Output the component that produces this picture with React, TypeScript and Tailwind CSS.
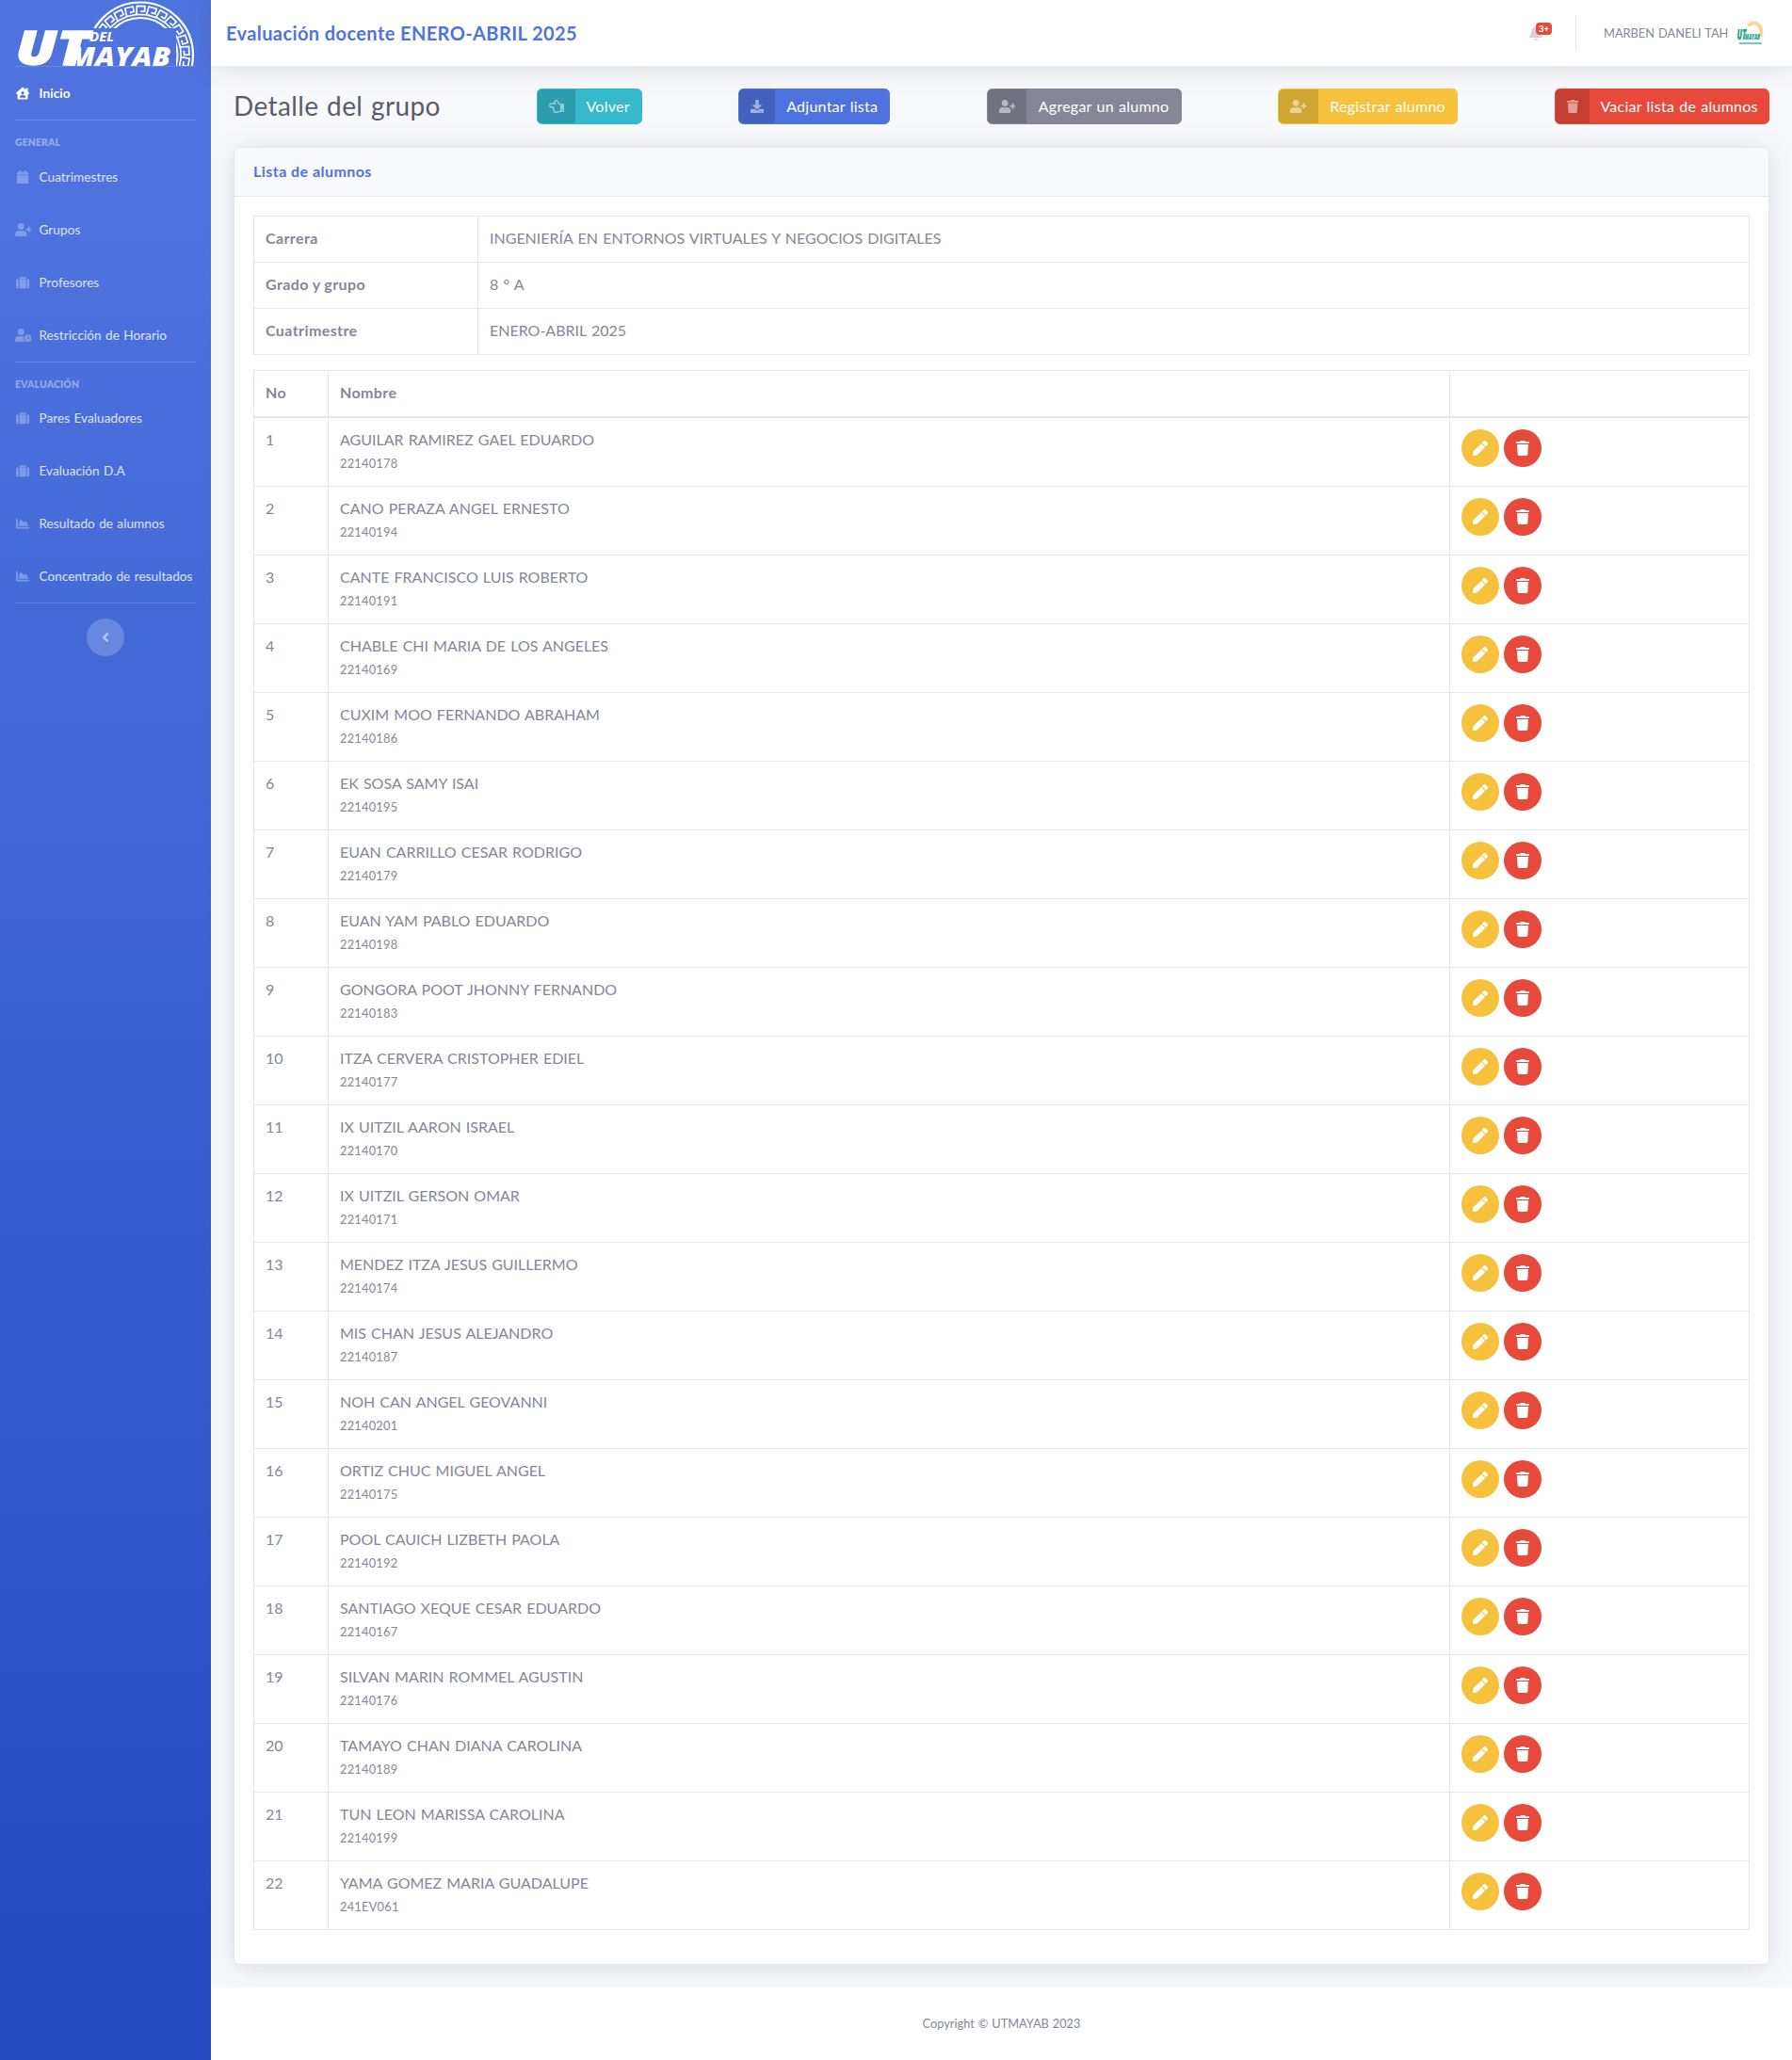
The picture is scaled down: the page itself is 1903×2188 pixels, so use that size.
import { ReactNode } from "react";
import {
  FaHouseUser, FaCalendar, FaUserPlus, FaSuitcase, FaUserClock, FaChartArea, FaAngleLeft,
  FaBell, FaRegHandPointLeft, FaDownload, FaTrash, FaPen,
} from "react-icons/fa";

const students: [string, string][] = [
  ["AGUILAR RAMIREZ GAEL EDUARDO", "22140178"],
  ["CANO PERAZA ANGEL ERNESTO", "22140194"],
  ["CANTE FRANCISCO LUIS ROBERTO", "22140191"],
  ["CHABLE CHI MARIA DE LOS ANGELES", "22140169"],
  ["CUXIM MOO FERNANDO ABRAHAM", "22140186"],
  ["EK SOSA SAMY ISAI", "22140195"],
  ["EUAN CARRILLO CESAR RODRIGO", "22140179"],
  ["EUAN YAM PABLO EDUARDO", "22140198"],
  ["GONGORA POOT JHONNY FERNANDO", "22140183"],
  ["ITZA CERVERA CRISTOPHER EDIEL", "22140177"],
  ["IX UITZIL AARON ISRAEL", "22140170"],
  ["IX UITZIL GERSON OMAR", "22140171"],
  ["MENDEZ ITZA JESUS GUILLERMO", "22140174"],
  ["MIS CHAN JESUS ALEJANDRO", "22140187"],
  ["NOH CAN ANGEL GEOVANNI", "22140201"],
  ["ORTIZ CHUC MIGUEL ANGEL", "22140175"],
  ["POOL CAUICH LIZBETH PAOLA", "22140192"],
  ["SANTIAGO XEQUE CESAR EDUARDO", "22140167"],
  ["SILVAN MARIN ROMMEL AGUSTIN", "22140176"],
  ["TAMAYO CHAN DIANA CAROLINA", "22140189"],
  ["TUN LEON MARISSA CAROLINA", "22140199"],
  ["YAMA GOMEZ MARIA GUADALUPE", "241EV061"],
];

const details: [string, string][] = [
  ["Carrera", "INGENIERÍA EN ENTORNOS VIRTUALES Y NEGOCIOS DIGITALES"],
  ["Grado y grupo", "8 ° A"],
  ["Cuatrimestre", "ENERO-ABRIL 2025"],
];

function Logo() {
  const keys = Array.from({ length: 13 }, (_, i) => -68 + i * 14);
  return (
    <svg viewBox="0 0 192 70" className="block h-[70px] w-48 overflow-visible" fill="none">
      <defs>
        <clipPath id="arch">
          <path d="M0 0 H192 V70 H171 V30 H0 Z" />
        </clipPath>
      </defs>
      <g clipPath="url(#arch)" stroke="#fff">
        <circle cx="133" cy="58.500" r="56" strokeWidth="2.2" />
        <circle cx="133" cy="58.500" r="39.500" strokeWidth="2" />
        {keys.map((a) => (
          <path
            key={a}
            transform={`rotate(${a} 133 58.500)`}
            d="M127.500 15.500 V6.500 H136 V12 H131.500 M126.700 15.500 H139"
            strokeWidth="1.7"
          />
        ))}
      </g>
      <g fill="#fff" className="font-['Open_Sans'] italic">
        <text x="0.500" y="69" fontSize="50" fontWeight="800" textLength="78" lengthAdjust="spacingAndGlyphs" stroke="#fff" strokeWidth="1.400">UT</text>
        <text x="79" y="43.500" fontSize="13.500" fontWeight="700" textLength="26" lengthAdjust="spacingAndGlyphs">DEL</text>
        <text x="57" y="69.500" fontSize="29" fontWeight="800" textLength="108" lengthAdjust="spacingAndGlyphs">MAYAB</text>
      </g>
    </svg>
  );
}

function Avatar() {
  return (
    <svg viewBox="0 0 32 32" className="size-8 overflow-visible" fill="none">
      <path d="M14 9 C16 4 25 4 27 12 Q28 16 27 20" stroke="#f9d79a" strokeWidth="4" />
      <g fill="#12a384" className="font-['Open_Sans'] italic">
        <text x="1.500" y="22.500" fontSize="15" fontWeight="800" textLength="10" lengthAdjust="spacingAndGlyphs">UT</text>
        <text x="10" y="22.500" fontSize="8" fontWeight="800" textLength="16" lengthAdjust="spacingAndGlyphs">MAYAB</text>
      </g>
      <path d="M4 27 H28" stroke="#4fb8a0" strokeWidth="1.500" />
    </svg>
  );
}

function NavItem({ icon, label, active }: { icon: ReactNode; label: string; active?: boolean }) {
  return (
    <a className={`flex h-14 items-center px-4 text-[13.6px] ${active ? "font-bold text-white" : "text-white/80"}`}>
      <span className={`mr-1 flex w-[17px] shrink-0 justify-center text-[14.2px] ${active ? "text-white" : "text-white/30"}`}>{icon}</span>
      <span className="ml-[4.5px] tracking-[0.05px] whitespace-nowrap [word-spacing:0.8px]">{label}</span>
    </a>
  );
}

const ic = "h-[1em] w-auto shrink-0";
const icWide = "h-[1em] w-[1.25em] shrink-0";
const icSm = "h-[0.875em] w-auto shrink-0";
const icSmWide = "h-[14px] w-[17.5px] shrink-0";

function ActionButton({ icon, label, color }: { icon: ReactNode; label: string; color: string }) {
  return (
    <a className={`flex h-[38px] items-stretch overflow-hidden rounded-[5.6px] border text-white ${color}`}>
      <span className="flex items-center bg-black/15 px-3 text-white/50">{icon}</span>
      <span className="flex grow items-center justify-center pb-px tracking-[0.25px] whitespace-nowrap [word-spacing:0.8px]">{label}</span>
    </a>
  );
}

export default function App() {
  return (
    <div className="flex min-h-[2188px] w-full bg-white font-['Lato',sans-serif] text-base leading-6 text-[#858796]">
      <aside className="w-56 shrink-0 bg-linear-to-b from-[#4e73df] from-10% to-[#224abe]">
        <div className="h-[70px] px-4"><Logo /></div>
        <hr className="mx-4 border-white/15" />
        <NavItem active icon={<FaHouseUser className={ic} />} label="Inicio" />
        <hr className="mx-4 border-white/15" />
        <h6 className="mt-[15px] mb-px px-4 text-[10.4px] leading-4 font-extrabold tracking-[0.15px] text-white/40">GENERAL</h6>
        <NavItem icon={<FaCalendar className={ic} />} label="Cuatrimestres" />
        <NavItem icon={<FaUserPlus className={icWide} />} label="Grupos" />
        <NavItem icon={<FaSuitcase className={ic} />} label="Profesores" />
        <NavItem icon={<FaUserClock className={icWide} />} label="Restricción de Horario" />
        <hr className="mx-4 border-white/15" />
        <h6 className="mt-[15px] px-4 text-[10.4px] leading-4 font-extrabold tracking-[0.15px] text-white/40">EVALUACIÓN</h6>
        <NavItem icon={<FaSuitcase className={ic} />} label="Pares Evaluadores" />
        <NavItem icon={<FaSuitcase className={ic} />} label="Evaluación D.A" />
        <NavItem icon={<FaChartArea className={ic} />} label="Resultado de alumnos" />
        <NavItem icon={<FaChartArea className={ic} />} label="Concentrado de resultados" />
        <hr className="mx-4 border-white/15" />
        <button className="mx-auto mt-4 flex size-10 items-center justify-center rounded-full bg-white/20 text-white/50">
          <FaAngleLeft className={ic} />
        </button>
      </aside>

      <div className="flex min-w-0 grow flex-col bg-[#f8f9fc]">
        <header className="flex h-[70px] shrink-0 items-center justify-between bg-white pr-7 pl-4 shadow-[0_2.4px_28px_0_rgba(58,59,69,0.15)]">
          <h5 className="text-xl font-bold tracking-[0.4px] text-[#4e73df]">Evaluación docente ENERO-ABRIL 2025</h5>
          <div className="flex items-center">
            <div className="relative text-[#d1d3e2]">
              <FaBell className={ic} />
              <span className="absolute -top-[3px] left-2 flex h-[13px] w-[17px] items-center justify-center rounded bg-[#e74a3b] text-[9.6px] leading-none font-bold text-white">3+</span>
            </div>
            <div className="mr-[29px] ml-[34px] h-[38px] border-r border-[#e3e6f0]" />
            <span className="mr-2 w-[132px] text-[12.8px] whitespace-nowrap [word-spacing:0.8px]">MARBEN DANELI TAH</span>
            <Avatar />
          </div>
        </header>

        <main className="px-6 pt-6">
          <div className="mb-6 flex h-[38px] items-center justify-between">
            <h1 className="w-[219px] pb-0.5 text-[28px] tracking-[0.4px] whitespace-nowrap text-[#5a5c69] [word-spacing:1px]">Detalle del grupo</h1>
            <ActionButton color="w-28 border-[#36b9cc] bg-[#36b9cc]" icon={<FaRegHandPointLeft className={ic} />} label="Volver" />
            <ActionButton color="w-[161px] border-[#4e73df] bg-[#4e73df]" icon={<FaDownload className={icSm} />} label="Adjuntar lista" />
            <ActionButton color="w-[207px] border-[#858796] bg-[#858796]" icon={<FaUserPlus className={icSmWide} />} label="Agregar un alumno" />
            <ActionButton color="w-[191px] border-[#f6c23e] bg-[#f6c23e]" icon={<FaUserPlus className={icSmWide} />} label="Registrar alumno" />
            <ActionButton color="w-[228px] border-[#e74a3b] bg-[#e74a3b]" icon={<FaTrash className="h-[14px] w-[12.25px] shrink-0" />} label="Vaciar lista de alumnos" />
          </div>

          <section className="rounded-[5.6px] border border-[#e3e6f0] bg-white shadow-[0_2.4px_28px_0_rgba(58,59,69,0.15)]">
            <div className="flex h-[52px] items-center rounded-t-[5.6px] border-b border-[#e3e6f0] bg-[#f8f9fc] px-5 pb-px">
              <h6 className="font-bold tracking-[0.45px] text-[#4e73df]">Lista de alumnos</h6>
            </div>
            <div className="p-5">
              <table className="mb-4 w-full table-fixed border-collapse">
                <colgroup><col className="w-[238px]" /><col /></colgroup>
                <tbody>
                  {details.map(([k, v]) => (
                    <tr key={k} className="h-[49px]">
                      <th className="border border-[#e3e6f0] px-3 pb-0.5 text-left font-bold tracking-[0.4px]">{k}</th>
                      <td className="border border-[#e3e6f0] px-3 pb-0.5 [word-spacing:1.1px]">{v}</td>
                    </tr>
                  ))}
                </tbody>
              </table>
              <table className="mb-4 w-full table-fixed border-collapse">
                <colgroup><col className="w-[79px]" /><col /><col className="w-[318px]" /></colgroup>
                <thead>
                  <tr className="h-[49px]">
                    <th className="border border-b-2 border-[#e3e6f0] px-3 pb-0.5 text-left font-bold tracking-[0.4px]">No</th>
                    <th className="border border-b-2 border-[#e3e6f0] px-3 pb-0.5 text-left font-bold tracking-[0.4px]">Nombre</th>
                    <th className="border border-b-2 border-[#e3e6f0]" />
                  </tr>
                </thead>
                <tbody>
                  {students.map(([name, id], i) => (
                    <tr key={id} className="h-[73px] align-top first:h-[74px]">
                      <td className="border border-[#e3e6f0] px-3 pt-[11px]">{i + 1}</td>
                      <td className="border border-[#e3e6f0] px-3 pt-[11px]">
                        <div className="[word-spacing:1px]">{name}</div>
                        <div className="mt-px text-[12.8px] leading-6 tracking-[0.25px]">{id}</div>
                      </td>
                      <td className="border border-[#e3e6f0] px-3 pt-3">
                        <div className="flex gap-[5px] text-white">
                          <button className="flex size-10 items-center justify-center rounded-full bg-[#f6c23e]"><FaPen className={ic} /></button>
                          <button className="flex size-10 items-center justify-center rounded-full bg-[#e74a3b]"><FaTrash className={ic} /></button>
                        </div>
                      </td>
                    </tr>
                  ))}
                </tbody>
              </table>
            </div>
          </section>
        </main>

        <footer className="mt-6 flex grow items-center justify-center bg-white pb-px text-[12.8px] [word-spacing:0.6px]">Copyright © UTMAYAB 2023</footer>
      </div>
    </div>
  );
}
